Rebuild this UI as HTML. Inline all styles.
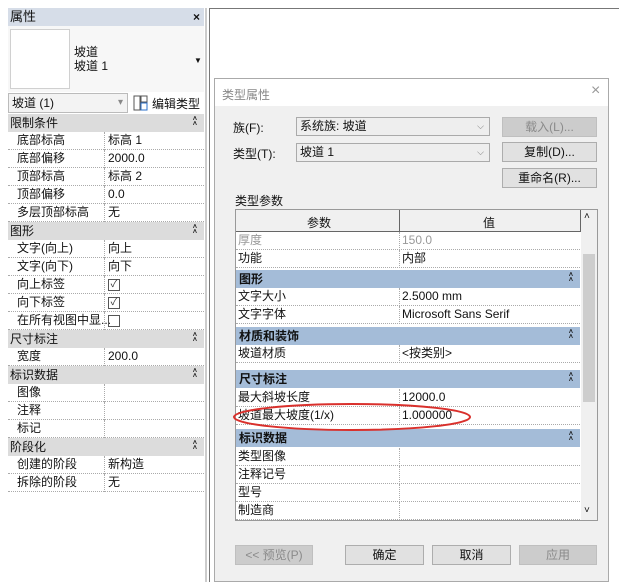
<!DOCTYPE html>
<html><head><meta charset="utf-8"><style>
*{margin:0;padding:0;box-sizing:border-box}
body{width:619px;height:582px;background:#fff;position:relative;overflow:hidden;font-family:"Liberation Sans","Noto Sans CJK SC",sans-serif;font-size:12px;color:#111}
.a{position:absolute}
.row{position:absolute;height:18px;border-bottom:1px dotted #aaa;line-height:17px;white-space:nowrap}
.sec{position:absolute;background:#dcdcdc;height:18px;line-height:18px;padding-left:2px}
.bsec{position:absolute;background:#a4bcd8;height:18px;line-height:18px;padding-left:3px;font-weight:bold}
.btn{position:absolute;border:1px solid #adadad;background:#e1e1e1;text-align:center;line-height:18px;font-size:12px}
.dis{background:#cccccc;color:#8a8a8a;border-color:#bfbfbf}
.chk{display:inline-block;width:12px;height:12px;border:1px solid #555;vertical-align:middle;font-size:10px;line-height:10px;text-align:center;color:#333}
.dc{position:absolute;right:7px;top:3px;font-size:7px;line-height:5px;font-weight:bold}
</style></head><body>
<div class="a" style="left:8px;top:8px;width:196px;height:18px;background:#d6dde8;line-height:18px;padding-left:2px;font-size:13px">属性<span style="position:absolute;right:4px;font-size:12px;font-weight:bold">×</span></div>
<div class="a" style="left:8px;top:26px;width:196px;height:66px;background:#f7f7f7"></div>
<div class="a" style="left:10px;top:29px;width:60px;height:60px;background:#fff;border:1px solid #d0d0d0"></div>
<div class="a" style="left:74px;top:45px;line-height:14px">坡道<br>坡道 1</div>
<div class="a" style="left:194px;top:56px;font-size:8px">▼</div>
<div class="a" style="left:8px;top:93px;width:120px;height:20px;border:1px solid #bbb;background:#f3f3f3;line-height:18px;padding-left:3px">坡道 (1)<span style="position:absolute;right:4px;color:#888;font-size:10px">▾</span></div>
<svg class="a" style="left:133px;top:95px" width="16" height="16"><rect x="1" y="1" width="6" height="14" fill="none" stroke="#555"/><rect x="8" y="1" width="6" height="6" fill="none" stroke="#555"/><rect x="8" y="8" width="6" height="7" fill="none" stroke="#2a6fc9"/></svg>
<div class="a" style="left:152px;top:95px">编辑类型</div>
<div class="a" style="left:205px;top:8px;width:2px;height:574px;background:#ccc"></div>
<div id="lp"></div>
<div class="a" style="left:209px;top:8px;width:410px;height:1px;background:#777"></div>
<div class="a" style="left:209px;top:8px;width:1px;height:574px;background:#777"></div>
<div class="a" style="left:214px;top:78px;width:395px;height:504px;border:1px solid #aaa;background:#f0f0f0"></div>
<div class="a" style="left:215px;top:79px;width:393px;height:27px;background:#fff"></div>
<div class="a" style="left:222px;top:86px;color:#888">类型属性</div>
<div class="a" style="left:591px;top:82px;color:#999;font-size:16px">×</div>
<div class="a" style="left:233px;top:119px">族(F):</div>
<div class="a" style="left:233px;top:145px">类型(T):</div>
<div class="a" style="left:296px;top:117px;width:194px;height:19px;border:1px solid #aaa;background:#eee;line-height:17px;padding-left:3px">系统族: 坡道<span style="position:absolute;right:5px;color:#777;font-size:9px">⌵</span></div>
<div class="a" style="left:296px;top:143px;width:194px;height:19px;border:1px solid #aaa;background:#eee;line-height:17px;padding-left:3px">坡道 1<span style="position:absolute;right:5px;color:#777;font-size:9px">⌵</span></div>
<div class="btn dis" style="left:502px;top:117px;width:95px;height:20px">载入(L)...</div>
<div class="btn" style="left:502px;top:142px;width:95px;height:20px">复制(D)...</div>
<div class="btn" style="left:502px;top:168px;width:95px;height:20px">重命名(R)...</div>
<div class="a" style="left:235px;top:192px">类型参数</div>
<div class="a" style="left:235px;top:209px;width:363px;height:312px;background:#fff;border:1px solid #999"></div>
<div class="a" style="left:236px;top:210px;width:344px;height:22px;background:#f0f0f0;border-bottom:1px solid #666"></div>
<div class="a" style="left:399px;top:210px;width:1px;height:22px;background:#666"></div>
<div class="a" style="left:580px;top:210px;width:1px;height:22px;background:#666"></div>
<div class="a" style="left:307px;top:214px">参数</div>
<div class="a" style="left:483px;top:214px">值</div>
<div class="a" style="left:581px;top:210px;width:16px;height:310px;background:#f0f0f0"></div>
<div class="a" style="left:584px;top:211px;font-size:10px">˄</div>
<div class="a" style="left:583px;top:254px;width:12px;height:148px;background:#cdcdcd"></div>
<div class="a" style="left:584px;top:505px;font-size:10px">˅</div>
<div id="tb"></div>
<svg class="a" style="left:0;top:0" width="619" height="582"><ellipse cx="352" cy="417" rx="118" ry="13" fill="none" stroke="#d9302c" stroke-width="2"/></svg>
<div class="btn dis" style="left:235px;top:545px;width:78px;height:20px">&lt;&lt; 预览(P)</div>
<div class="btn" style="left:345px;top:545px;width:79px;height:20px">确定</div>
<div class="btn" style="left:432px;top:545px;width:79px;height:20px">取消</div>
<div class="btn dis" style="left:519px;top:545px;width:78px;height:20px">应用</div>
<script>
var DC='<span class="dc">˄<br>˄</span>';
var L=[["s","限制条件"],["r","底部标高","标高 1"],["r","底部偏移","2000.0"],["r","顶部标高","标高 2"],["r","顶部偏移","0.0"],["r","多层顶部标高","无"],["s","图形"],["r","文字(向上)","向上"],["r","文字(向下)","向下"],["r","向上标签","<span class=chk>✓</span>"],["r","向下标签","<span class=chk>✓</span>"],["r","在所有视图中显...","<span class=chk></span>"],["s","尺寸标注"],["r","宽度","200.0"],["s","标识数据"],["r","图像",""],["r","注释",""],["r","标记",""],["s","阶段化"],["r","创建的阶段","新构造"],["r","拆除的阶段","无"]];
var h="",y=114;
L.forEach(function(e){if(e[0]=="s"){h+='<div class="sec" style="left:8px;top:'+y+'px;width:196px">'+e[1]+DC+'</div>'}else{h+='<div class="row" style="left:8px;top:'+y+'px;width:196px;padding-left:9px">'+e[1]+'</div><div class="a" style="left:104px;top:'+y+'px;height:18px;border-left:1px dotted #aaa;padding-left:3px;line-height:17px">'+e[2]+'</div>'}y+=18});
document.getElementById("lp").innerHTML=h;
var T=[["r","厚度","150.0",232,1],["r","功能","内部",250],["s","图形","",270],["r","文字大小","2.5000 mm",288],["r","文字字体","Microsoft Sans Serif",306],["s","材质和装饰","",327],["r","坡道材质","&lt;按类别&gt;",345],["s","尺寸标注","",370],["r","最大斜坡长度","12000.0",389],["r","坡道最大坡度(1/x)","1.000000",407],["s","标识数据","",429],["r","类型图像","",448],["r","注释记号","",466],["r","型号","",484],["r","制造商","",502]];
h="";
T.forEach(function(e){var y=e[3];if(e[0]=="s"){h+='<div class="bsec" style="left:236px;top:'+y+'px;width:344px">'+e[1]+DC+'</div>'}else{var c=e[4]?'color:#999;':'';h+='<div class="row" style="left:236px;top:'+y+'px;width:344px;padding-left:2px;'+c+'">'+e[1]+'</div><div class="a" style="left:399px;top:'+y+'px;height:18px;border-left:1px dotted #aaa;padding-left:2px;line-height:17px;font-size:12px;'+c+'">'+e[2]+'</div>'}});
document.getElementById("tb").innerHTML=h;
</script>
</body></html>
